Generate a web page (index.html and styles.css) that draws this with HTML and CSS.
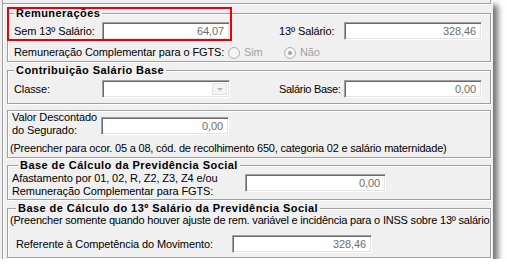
FILE: index.html
```html
<!DOCTYPE html>
<html lang="pt-BR">
<head>
  <meta charset="UTF-8" />
  <title>Remunerações</title>
  <link rel="stylesheet" href="styles.css">
</head>
<body>
  <div class="window">
    <div class="frame">
      <div class="prev"></div>

      <!-- Remunerações -->
      <fieldset class="group g1">
        <legend>Remunerações</legend>
        <div class="pair first">
          <span class="lbl">Sem 13º Salário:</span>
          <div class="edit">64,07</div>
          <span></span>
          <span class="lbl">13º Salário:</span>
          <div class="edit">328,46</div>
        </div>
        <div class="radios">
          <span class="lbl">Remuneração Complementar para o FGTS:</span>
          <span class="radio"><i class="dot"></i>Sim</span>
          <span class="radio checked"><i class="dot"></i>Não</span>
        </div>
      </fieldset>

      <!-- Contribuição Salário Base -->
      <fieldset class="group g2">
        <legend>Contribuição Salário Base</legend>
        <div class="pair">
          <span class="lbl">Classe:</span>
          <div class="edit combo"><span class="combo-btn"><i class="arrow"></i></span></div>
          <span></span>
          <span class="lbl tight">Salário Base:</span>
          <div class="edit">0,00</div>
        </div>
      </fieldset>

      <!-- Valor descontado -->
      <fieldset class="group g3">
        <div class="desc-row">
          <span class="lbl">Valor Descontado<br>do Segurado:</span>
          <div class="edit">0,00</div>
        </div>
        <p class="note">(Preencher para ocor. 05 a 08, cód. de recolhimento 650, categoria 02 e salário maternidade)</p>
      </fieldset>

      <!-- Base de Cálculo da Previdência Social -->
      <fieldset class="group g4">
        <legend>Base de Cálculo da Previdência Social</legend>
        <div class="afast-row">
          <span class="lbl">Afastamento por 01, 02, R, Z2, Z3, Z4 e/ou<br>Remuneração Complementar para FGTS:</span>
          <div class="edit">0,00</div>
        </div>
      </fieldset>

      <!-- Base de Cálculo do 13º -->
      <fieldset class="group g5">
        <legend>Base de Cálculo do 13º Salário da Previdência Social</legend>
        <p class="note">(Preencher somente quando houver ajuste de rem. variável e incidência para o INSS sobre 13º salário</p>
        <div class="ref-row">
          <span class="lbl">Referente à Competência do Movimento:</span>
          <div class="edit">328,46</div>
        </div>
      </fieldset>
    </div>
    <div class="highlight"></div>
  </div>
</body>
</html>
```

FILE: styles.css
```css
/* Base */
html, body {
  margin: 0;
  padding: 0;
  background: #ffffff;
  font-family: 'Liberation Sans', Arial, sans-serif;
  font-size: 11px;
  letter-spacing: -0.1px;
  color: #000000;
}
/* Dialog window with its drop shadow */
.window {
  position: relative;
  width: 493px;
  height: 259px;
  background: #f0f0f0;
  box-shadow: 5px 5px 6px rgba(0,0,0,0.55);
  overflow: hidden;
}
.frame {
  margin-left: 2px;
  height: 100%;
  border-left: 1px solid #a0a0a0;
  box-shadow: inset 1px 0 #ffffff;
}
/* bottom of the group above (scrolled off) */
.prev {
  width: 487px;
  height: 3px;
  border-bottom: 1px solid #a0a0a0;
  border-right: 1px solid #a0a0a0;
  box-shadow: 0 1px #ffffff;
}
/* Group boxes */
.group {
  margin: 0 0 0 4px;
  padding: 0;
  width: 484px;
  box-sizing: border-box;
  border: 1px solid #a0a0a0;
  box-shadow: inset 1px 1px #ffffff, 1px 1px #ffffff;
  min-width: 0;
}
.group legend {
  margin-left: 6px;
  padding: 0 2px;
  font-weight: bold;
  letter-spacing: 0.45px;
  line-height: 12px;
  background: #f0f0f0;
}
.lbl { line-height: 13px; white-space: nowrap; }
.lbl.tight { letter-spacing: -0.3px; }
.note {
  margin: 0;
  line-height: 13px;
  white-space: nowrap;
  overflow: hidden;
  letter-spacing: -0.2px;
}
/* Sunken edit box */
.edit {
  height: 18px;
  box-sizing: border-box;
  background: #ffffff;
  border: 1px solid;
  border-color: #a0a0a0 #ffffff #ffffff #a0a0a0;
  box-shadow: inset 1px 1px #696969, inset -1px -1px #e3e3e3;
  padding: 0 5px;
  line-height: 16px;
  text-align: right;
  color: #6d6d6d;
}
.combo {
  display: flex;
  justify-content: flex-end;
  padding: 2px;
}
.combo-btn {
  width: 15px;
  height: 12px;
  box-sizing: border-box;
  border: 1px solid #e3e3e3;
  background: #f4f4f4;
  display: flex;
  align-items: center;
  justify-content: center;
}
.arrow {
  border-left: 3px solid transparent;
  border-right: 3px solid transparent;
  border-top: 3px solid #b5b5b5;
}

/* Remunerações */
.g1 { margin-top: 3px; padding-bottom: 2px; }
.pair {
  display: grid;
  grid-template-columns: 88px 128px 49px 65px 138px;
  align-items: center;
  padding-left: 6px;
}
.g1 .pair { margin-top: 3px; }
.radios {
  display: grid;
  grid-template-columns: 214px 56px auto;
  align-items: center;
  margin-top: 6px;
  padding-left: 6px;
}
.radio {
  display: flex;
  align-items: center;
  gap: 4px;
  color: #a0a0a0;
  line-height: 13px;
}
.dot {
  width: 12px;
  height: 12px;
  box-sizing: border-box;
  border-radius: 50%;
  border: 1px solid #b0b0b0;
  background: #f4f4f4;
  display: flex;
  align-items: center;
  justify-content: center;
}
.radio.checked .dot::after {
  content: "";
  width: 4px;
  height: 4px;
  border-radius: 50%;
  background: #a0a0a0;
}

/* Contribuição Salário Base */
.g2 { margin-top: 2px; padding-bottom: 5px; }
.g2 .pair { margin-top: 4px; }

/* Valor descontado */
.g3 { margin-top: 6px; padding: 0 0 2px 4px; }
.desc-row {
  display: grid;
  grid-template-columns: 89px 128px;
  align-items: start;
}
.desc-row .edit { margin-top: 6px; }
.g3 .note { margin: 5px 0 0 -2px; }

/* Base de Cálculo da Previdência Social */
.g4 { margin-top: 1px; padding: 1px 0 1px 4px; }
.afast-row {
  display: grid;
  grid-template-columns: 233px 141px;
  align-items: start;
}
.afast-row .edit { margin-top: 2px; }

/* Base de Cálculo do 13º */
.g5 { margin-top: 2px; padding: 0 0 4px 2px; }
.ref-row {
  display: grid;
  grid-template-columns: 216px 140px;
  align-items: center;
  margin-top: 8px;
  padding-left: 6px;
}

/* Red highlight drawn over the first row */
.highlight {
  position: absolute;
  left: 7px;
  top: 7px;
  width: 225px;
  height: 34px;
  box-sizing: border-box;
  border: 2px solid #e8000b;
}
```
